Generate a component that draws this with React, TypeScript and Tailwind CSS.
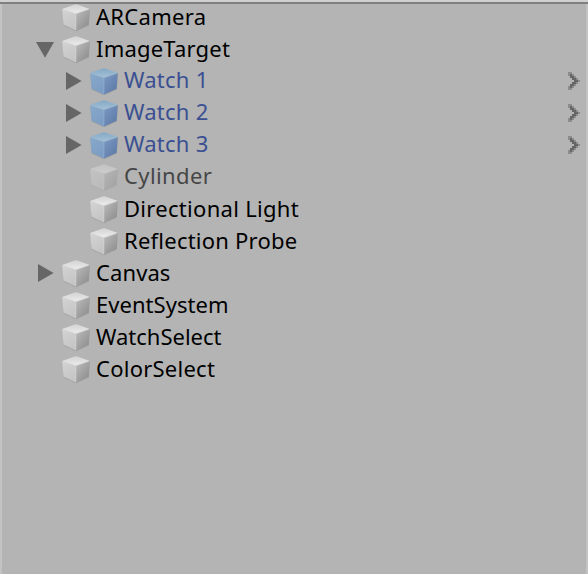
type Tone = "normal" | "prefab" | "inactive";

interface Item {
  name: string;
  indent: string;
  tone?: Tone;
  fold?: "open" | "closed";
  tracking: string;
  chevron?: boolean;
}

const items: Item[] = [
  { name: "ARCamera", indent: "pl-[32px]", tracking: "tracking-[0.3px]" },
  { name: "ImageTarget", indent: "pl-[32px]", fold: "open", tracking: "tracking-[0.2px]" },
  { name: "Watch 1", indent: "pl-[60px]", fold: "closed", tone: "prefab", tracking: "tracking-[0.25px]", chevron: true },
  { name: "Watch 2", indent: "pl-[60px]", fold: "closed", tone: "prefab", tracking: "tracking-[0.25px]", chevron: true },
  { name: "Watch 3", indent: "pl-[60px]", fold: "closed", tone: "prefab", tracking: "tracking-[0.25px]", chevron: true },
  { name: "Cylinder", indent: "pl-[60px]", tone: "inactive", tracking: "tracking-[0.4px]" },
  { name: "Directional Light", indent: "pl-[60px]", tracking: "tracking-[0.3px]" },
  { name: "Reflection Probe", indent: "pl-[60px]", tracking: "tracking-[0.23px]" },
  { name: "Canvas", indent: "pl-[32px]", fold: "closed", tracking: "tracking-[0.1px]" },
  { name: "EventSystem", indent: "pl-[32px]", tracking: "tracking-[0.05px]" },
  { name: "WatchSelect", indent: "pl-[32px]", tracking: "tracking-[0px]" },
  { name: "ColorSelect", indent: "pl-[32px]", tracking: "tracking-[0.25px]" },
];

const textStyle: Record<Tone, string> = {
  normal: "text-black leading-[25px]",
  prefab: "text-[#3a4f92] leading-[23px]",
  inactive: "text-[#464646] leading-[23px]",
};

function CubeGradients() {
  return (
    <svg className="absolute size-0" aria-hidden="true">
      <defs>
        <linearGradient id="normal-top" x1="0" y1="0" x2="0" y2="1">
          <stop offset="0" stopColor="#d2d2d2" /><stop offset="1" stopColor="#ededed" />
        </linearGradient>
        <linearGradient id="normal-left" x1="0" y1="0" x2="0.4" y2="1">
          <stop offset="0" stopColor="#d4d4d4" /><stop offset="1" stopColor="#c5c5c5" />
        </linearGradient>
        <linearGradient id="normal-right" x1="0" y1="0" x2="0.8" y2="1">
          <stop offset="0" stopColor="#bcbcbc" /><stop offset="1" stopColor="#8c8c8c" />
        </linearGradient>
        <linearGradient id="prefab-top" x1="0" y1="0" x2="0" y2="1">
          <stop offset="0" stopColor="#85a9c4" /><stop offset="1" stopColor="#a3c0d7" />
        </linearGradient>
        <linearGradient id="prefab-left" x1="0" y1="0" x2="0.4" y2="1">
          <stop offset="0" stopColor="#88a8c9" /><stop offset="1" stopColor="#7d9ec4" />
        </linearGradient>
        <linearGradient id="prefab-right" x1="0" y1="0" x2="0.8" y2="1">
          <stop offset="0" stopColor="#7b99c0" /><stop offset="1" stopColor="#5d7aa8" />
        </linearGradient>
      </defs>
    </svg>
  );
}

function Cube({ tone }: { tone: Tone }) {
  const hue = tone === "prefab" ? "prefab" : "normal";
  const edge = tone === "prefab" ? "#a9c4de" : "#e8e8e8";
  return (
    <svg viewBox="0 0 28 28" className={`size-7 shrink-0 ${tone === "inactive" ? "opacity-45" : ""}`}>
      <path d="M.5 5.5 14 10.5 27.8 5.5 26.8 21.5 14 27.2 1.4 21.5Z" fill="#777" opacity=".35" />
      <path d="M14 0 27.8 5 14 9.8.1 5Z" fill={`url(#${hue}-top)`} />
      <path d="M.1 5 14 9.8V26.4L1.5 20.8Z" fill={`url(#${hue}-left)`} />
      <path d="M27.8 5 14 9.8V26.4L26.6 20.8Z" fill={`url(#${hue}-right)`} />
      <path d="M.8 5.2 14 9.9 27.2 5.2M14 9.9V25.8" fill="none" stroke={edge} strokeWidth=".7" opacity=".5" />
    </svg>
  );
}

function Fold({ state }: { state?: "open" | "closed" }) {
  return (
    <svg viewBox="0 0 30 28" className="h-7 w-[30px] shrink-0">
      {state === "open" && <path d="M4 6H22L13 21.7Z" fill="#666" />}
      {state === "closed" && <path d="M6 4 21.6 13 6 22Z" fill="#666" />}
    </svg>
  );
}

function Chevron() {
  return (
    <svg viewBox="0 0 13 18" className="mt-1 mr-[6px] ml-auto h-[18px] w-[13px] shrink-0" shapeRendering="crispEdges">
      <path d="M1 0h4v2h2v2h2v2h2v2h2v2h-2v2H9v2H7v2H5v2H1v-4h2v-2h2v-2h2V8H5V6H3V4H1Z" fill="#8c8c8c" />
      <path d="M3 2h2v2h2v2h2v2h2v2H9v2H7v2H5v2H3V12h2v-2h2V8H5V6H3Z" fill="#666" />
    </svg>
  );
}

export default function App() {
  return (
    <div className="flex h-[574px] w-[588px] flex-col overflow-hidden bg-[#b4b4b4]">
      <CubeGradients />
      <div className="h-1 shrink-0 border-b-2 border-[#808080] bg-[#d0d0d0]" />
      <div className="flex-1 border-x-2 border-[#c3c3c3]">
        {items.map((item) => {
          const tone = item.tone ?? "normal";
          return (
            <div key={item.name} className={`flex h-8 items-start ${item.indent}`}>
              <div className="-ml-[2px] flex">
                <Fold state={item.fold} />
                <Cube tone={tone} />
              </div>
              <span className={`ml-[6px] whitespace-pre font-['Noto_Sans',sans-serif] text-[22px] ${item.tracking} ${textStyle[tone]}`}>
                {item.name}
              </span>
              {item.chevron && <Chevron />}
            </div>
          );
        })}
      </div>
    </div>
  );
}
